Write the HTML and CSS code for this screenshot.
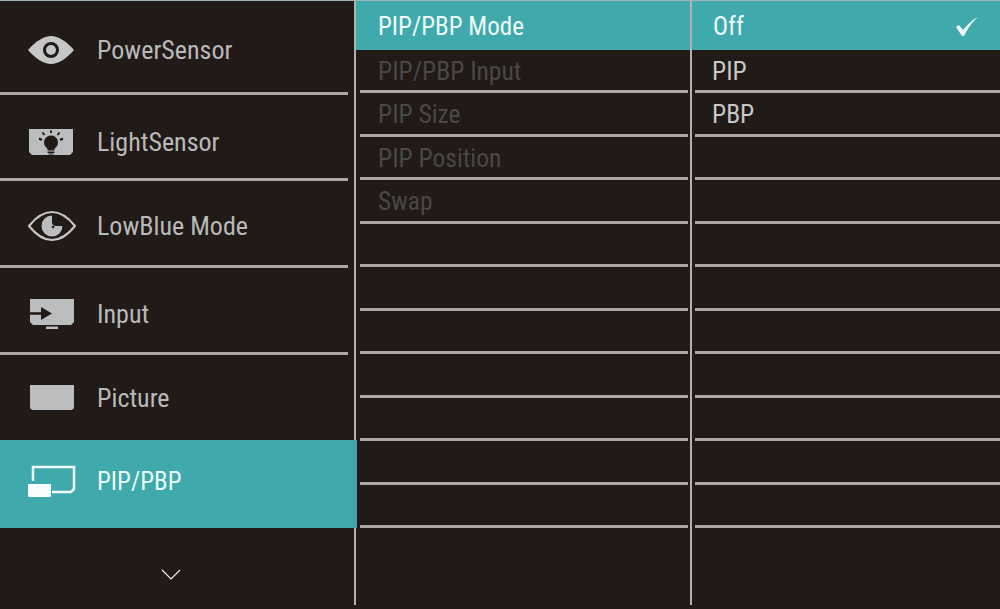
FILE: index.html
```html
<!DOCTYPE html>
<html lang="en">
<head>
    <meta charset="UTF-8">
    <meta name="viewport" content="width=device-width, initial-scale=1.0">
    <title>PIP/PBP</title>
    <link rel="stylesheet" href="styles.css">
</head>
<body>
    <div class="osd">
        <div class="side">
            <div class="side-item">
                <svg class="side-icon" viewBox="0 0 48 32">
                    <path d="M0 16C8 7 16 2 23 2s15 5 23 14c-8 9-16 14-23 14S8 25 0 16z" fill="#c6c6c6"/>
                    <circle cx="23" cy="16" r="6.500" fill="none" stroke="#211a17" stroke-width="3"/>
                </svg>
                <span>PowerSensor</span>
            </div>
            <div class="side-item">
                <svg class="side-icon" viewBox="0 0 48 32">
                    <path d="M1 3h44v23l-3 3H4l-3-3z" fill="#bcbdbf"/>
                    <path d="M23 9.500a7 7 0 0 0-4.500 12.300c1 1 1.200 1.800 1.200 2.700h6.600c0-.9.200-1.700 1.200-2.700A7 7 0 0 0 23 9.500z" fill="#211a17"/>
                    <path d="M19.500 25.500h7v1.500h-7zM20.500 27.500h5v1h-5z" fill="#211a17"/>
                    <path d="M23 4.500v2.500M14.500 6.500l2 2.500M31.500 6.500l-2 2.500M11 12.500l3 1.500M35 12.500l-3 1.500" stroke="#211a17" stroke-width="2" fill="none"/>
                </svg>
                <span>LightSensor</span>
            </div>
            <div class="side-item">
                <svg class="side-icon" viewBox="0 0 48 32">
                    <path d="M1 16C9 6 17 2 24 2s15 4 23 14c-8 10-16 14-23 14S9 26 1 16z" fill="none" stroke="#c6c6c6" stroke-width="2.200"/>
                    <path d="M24 5.500a10.500 10.500 0 1 0 10.500 10.500H28a4 4 0 0 1-4-4z" fill="#bcbdbf"/>
                    <circle cx="25" cy="17" r="1.300" fill="#211a17"/>
                </svg>
                <span>LowBlue Mode</span>
            </div>
            <div class="side-item">
                <svg class="side-icon" viewBox="0 0 48 32">
                    <path d="M2 1h44v23l-3 3H5l-3-3z" fill="#bcbdbf"/>
                    <path d="M18 28.500h12v2.500H18z" fill="#bcbdbf"/>
                    <path d="M0 15.500h14" stroke="#211a17" stroke-width="2.500"/>
                    <path d="M13 9l11 6.500-11 6.500z" fill="#211a17"/>
                </svg>
                <span>Input</span>
            </div>
            <div class="side-item">
                <svg class="side-icon" viewBox="0 0 48 32">
                    <path d="M2 3h44v23l-2 2H4l-2-2z" fill="#bcbdbf"/>
                </svg>
                <span>Picture</span>
            </div>
            <div class="side-item active">
                <svg class="side-icon" viewBox="0 0 48 32">
                    <path d="M5 16V2h41v22l-3 3H24" fill="none" stroke="#f2fbfb" stroke-width="2.500"/>
                    <path d="M0 19h23v12l-2 2H2l-2-2z" fill="#f7fdfd"/>
                </svg>
                <span>PIP/PBP</span>
            </div>
            <div class="side-more">
                <svg class="chevron" viewBox="0 0 20 11">
                    <path d="M1 1l9 9 9-9" fill="none" stroke="#f2f2f2" stroke-width="1.200"/>
                </svg>
            </div>
        </div>

        <ul class="list list-mid">
            <li class="selected">PIP/PBP Mode</li>
            <li class="off">PIP/PBP Input</li>
            <li class="off">PIP Size</li>
            <li class="off">PIP Position</li>
            <li class="off">Swap</li>
            <li></li>
            <li></li>
            <li></li>
            <li></li>
            <li></li>
            <li></li>
            <li></li>
        </ul>

        <ul class="list list-right">
            <li class="selected">
                Off
                <svg class="check" viewBox="0 0 22 19">
                    <path d="M0 10l3-2 4 5C11 8 16 3 22 0 16 5 12 11 8 19h-2z" fill="#f2fbfb"/>
                </svg>
            </li>
            <li>PIP</li>
            <li>PBP</li>
            <li></li>
            <li></li>
            <li></li>
            <li></li>
            <li></li>
            <li></li>
            <li></li>
            <li></li>
            <li></li>
        </ul>
    </div>
</body>
</html>
```

FILE: styles.css
```css
* { box-sizing: border-box; margin: 0; padding: 0; }
body {
    font-family: Roboto, "Liberation Sans", sans-serif;
    background-color: #211a17;
    overflow: hidden;
}
.osd {
    display: flex;
    width: 1000px;
    height: 605px;
    border-top: 1px solid #9fb5b5;
}

.side {
    width: 356px;
    flex-shrink: 0;
    border-right: 2px solid #b5b0ae;
}
.side-item {
    display: flex;
    align-items: center;
    gap: 21px;
    height: 87px;
    margin-right: 6px;
    padding-left: 28px;
    border-bottom: 3px solid #aca7a5;
    font-size: 26px;
    font-stretch: 87%;
    color: #b9b9b9;
}
.side-item:nth-child(1) { height: 94px; padding-top: 6px; }
.side-item:nth-child(2) { height: 86px; padding-top: 11px; }
.side-item:nth-child(3) { height: 87px; padding-top: 5px; }
.side-item:nth-child(4) { height: 87px; padding-top: 7px; }
.side-item:nth-child(5) { height: 85px; padding-top: 1px; border-bottom: none; }
.side-item.active {
    position: relative;
    height: 88px;
    margin-right: -3px;
    padding-bottom: 6px;
    border-bottom: none;
    background: #3fa9ac;
    font-size: 25px;
    color: #e9fbfb;
}
.side-icon { width: 48px; height: 32px; flex-shrink: 0; }
.side-more {
    display: flex;
    justify-content: center;
    padding: 41px 12px 0 0;
}
.chevron { width: 20px; height: 11px; }

.list {
    list-style: none;
    font-size: 25.5px;
    font-stretch: 87%;
}
.list li {
    display: flex;
    align-items: center;
    height: 43.5px;
    padding-top: 2px;
    padding-left: 18px;
    border-bottom: 3px solid #aca7a5;
    color: #c8c8c8;
}
.list li.selected {
    justify-content: space-between;
    height: 48.5px;
    padding-top: 2px;
    background: #3fa9ac;
    border-bottom: none;
    font-size: 25px;
    color: #eefcfc;
}
.list li.off { color: #4a4747; }
.list-mid {
    width: 336px;
    flex-shrink: 0;
    padding: 0 2px 0 4px;
    border-right: 2px solid #b5b0ae;
}
.list-mid li.selected { margin: 0 -2px 0 -4px; padding-left: 22px; }
.list-right {
    flex: 1;
    padding-left: 3px;
}
.list-right li { padding-left: 17px; }
.list-right li.selected {
    margin-left: -3px;
    padding: 2px 22px 0 21px;
}
.check { width: 22px; height: 19px; }
```
